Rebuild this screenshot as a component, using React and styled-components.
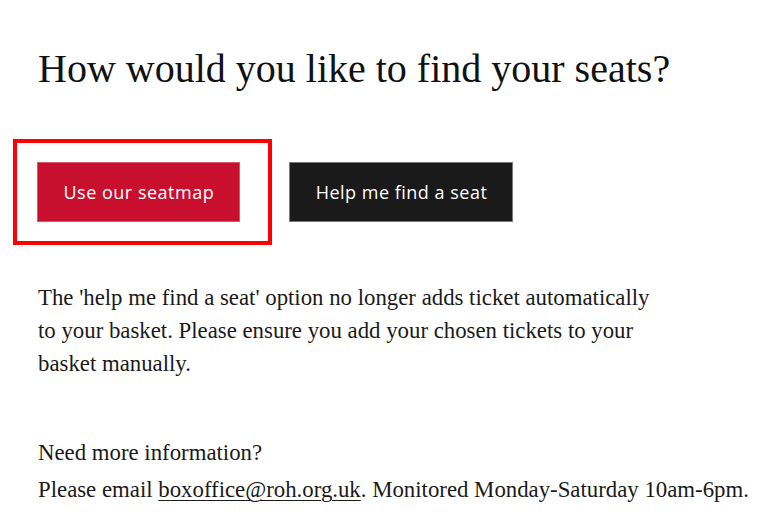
import React from "react";
import styled, { createGlobalStyle } from "styled-components";

const Global = createGlobalStyle`
  html, body { margin: 0; padding: 0; background: #ffffff; }
  body { font-family: "Liberation Serif", "Times New Roman", serif; color: #1a1a1a; }
`;

const Page = styled.main`
  padding: 45px 20px 0 38px;
  display: flex;
  flex-direction: column;
  align-items: flex-start;
`;

const Title = styled.h1`
  margin: 0;
  font-family: "Liberation Serif", serif;
  font-weight: 400;
  font-size: 40px;
  line-height: 48px;
  color: #111;
`;

const ButtonRow = styled.div`
  display: flex;
  align-items: center;
  gap: 17px;
  margin-top: 46px;
  margin-left: -25px;
`;

const Highlight = styled.div`
  border: 4px solid #ff0000;
  padding: 19px 28px 19px 20px;
  display: flex;
`;

const Button = styled.button`
  height: 60px;
  padding: 0 25px 0 25.5px;
  border: 1px solid ${(p) => (p.$variant === "red" ? "#d9566a" : "#7a7a7a")};
  background: ${(p) => (p.$variant === "red" ? "#c8102e" : "#1a1a1a")};
  color: #ffffff;
  font-family: "Open Sans", "Liberation Sans", sans-serif;
  font-size: 18px;
  letter-spacing: 0.5px;
  font-weight: 500;
  cursor: pointer;
  border-radius: 0;
`;

const Paragraph = styled.p`
  margin: ${(p) => p.$top}px 0 0 0;
  font-size: 22.8px;
  line-height: ${(p) => p.$lh}px;
  color: #1a1a1a;
  white-space: nowrap;
`;

const Link = styled.a`
  color: #1a1a1a;
  text-decoration: underline;
  text-underline-offset: 3px;
  text-decoration-thickness: 1px;
`;

export default function App() {
  return (
    <>
      <Global />
      <Page>
        <Title>How would you like to find your seats?</Title>
        <ButtonRow>
          <Highlight>
            <Button $variant="red">Use our seatmap</Button>
          </Highlight>
          <Button $variant="black">Help me find a seat</Button>
        </ButtonRow>
        <Paragraph $top={36} $lh={33}>
          The 'help me find a seat' option no longer adds ticket automatically
          <br />
          to your basket. Please ensure you add your chosen tickets to your
          <br />
          basket manually.
        </Paragraph>
        <Paragraph $top={54} $lh={37}>
          Need more information?
          <br />
          Please email <Link href="#">boxoffice@roh.org.uk</Link>. Monitored Monday-Saturday 10am-6pm.
        </Paragraph>
      </Page>
    </>
  );
}
